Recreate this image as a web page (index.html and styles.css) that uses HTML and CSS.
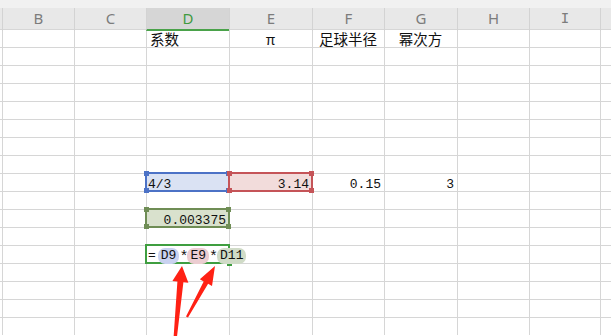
FILE: index.html
```html
<!DOCTYPE html>
<html lang="zh-CN">
<head>
    <meta charset="UTF-8">
    <meta name="viewport" content="width=device-width, initial-scale=1.0">
    <title>足球体积</title>
    <link rel="stylesheet" href="styles.css">
</head>
<body>
    <div class="topbar"></div>
    <div class="colhead">
        <div class="hd"></div>
        <div class="hd">B</div>
        <div class="hd">C</div>
        <div class="hd active">D</div>
        <div class="hd">E</div>
        <div class="hd">F</div>
        <div class="hd">G</div>
        <div class="hd">H</div>
        <div class="hd hd-i">I</div>
        <div class="hd"></div>
    </div>

    <div class="cells">
        <div class="cell r1 cD zh">系数</div>
        <div class="cell r1 cE zh center">π</div>
        <div class="cell r1 cF zh center">足球半径</div>
        <div class="cell r1 cG zh center">幂次方</div>

        <div class="cell r9 cD num ref blue">4/3</div>
        <div class="cell r9 cE num ref red right">3.14</div>
        <div class="cell r9 cF num right">0.15</div>
        <div class="cell r9 cG num right">3</div>

        <div class="cell r11 cD num ref green right">0.003375</div>

        <div class="cell r13 cD num edit">
            <span class="formula">=<span class="tok tok-blue">D9</span><span class="op">*</span><span class="tok tok-red">E9</span><span class="op">*</span><span class="tok tok-green">D11</span></span>
        </div>
    </div>

    <svg class="arrows" width="611" height="336" viewBox="0 0 611 336">
        <polygon points="182,266 188.4,282.7 183.4,282.2 176.6,340 173.4,340 177.4,281.6 172.4,281.1"/>
        <polygon points="215,266 212,286 208.1,283.8 188,317.6 186,316.4 203.7,281.4 199.8,279.2"/>
    </svg>
</body>
</html>
```

FILE: styles.css
```css
:root{
    --cols: 2px 72px 72px 83px 83px 72px 73px 72px 71px 1fr;
    --line: #d6d6d6;
}
body{
    margin: 0;
    position: relative;
    height: 336px;
    overflow: hidden;
    background: #fff;
    color: #111;
}
.topbar{
    height: 8px;
    background: #f1f1f1;
}
.colhead{
    display: grid;
    grid-template-columns: var(--cols);
    height: 21px;
    background: #e8e8e8;
}
.hd{
    border-left: 1px solid #d3d3d3;
    text-align: center;
    line-height: 21px;
    font-family: "Noto Sans", sans-serif;
    font-size: 15px;
    color: #7c7c7c;
}
.hd:first-child{
    border-left: none;
}
.hd-i{
    font-family: "DejaVu Sans Mono", monospace;
    font-size: 14px;
}
.hd.active{
    box-sizing: border-box;
    background: #d6d6d6;
    color: #3f9a3f;
    border-bottom: 2px solid #4aa24a;
}

/* grid lines are painted, cells are placed on the grid */
.cells{
    display: grid;
    grid-template-columns: var(--cols);
    grid-template-rows: repeat(17, 18px);
    background:
        linear-gradient(to right,
            transparent 2px, var(--line) 2px 3px,
            transparent 3px 74px, var(--line) 74px 75px,
            transparent 75px 146px, var(--line) 146px 147px,
            transparent 147px 229px, var(--line) 229px 230px,
            transparent 230px 312px, var(--line) 312px 313px,
            transparent 313px 384px, var(--line) 384px 385px,
            transparent 385px 457px, var(--line) 457px 458px,
            transparent 458px 529px, var(--line) 529px 530px,
            transparent 530px 600px, var(--line) 600px 601px,
            transparent 601px),
        repeating-linear-gradient(to bottom, var(--line) 0 1px, #fff 1px 18px);
}
.r1{ grid-row: 1; }
.r9{ grid-row: 9; }
.r11{ grid-row: 11; }
.r13{ grid-row: 13; }
.cD{ grid-column: 4; }
.cE{ grid-column: 5; }
.cF{ grid-column: 6; }
.cG{ grid-column: 7; }

.cell{
    box-sizing: border-box;
    padding: 1px 3px 0 3px;
    line-height: 18px;
    white-space: nowrap;
}
.zh{
    font-family: "Noto Sans CJK SC", sans-serif;
    font-size: 14.5px;
    padding-left: 4px;
}
.num{
    font-family: "Liberation Mono", monospace;
    font-size: 13px;
    padding-top: 3px;
    padding-left: 2px;
}
.center{
    text-align: center;
    padding-left: 0;
    padding-right: 0;
}
.right{
    text-align: right;
}

/* referenced ranges */
.ref{
    position: relative;
    background: var(--fill);
}
.ref::after{
    content: "";
    position: absolute;
    inset: -1px;
    border: 2px solid var(--c);
}
.ref::before{
    content: "";
    position: absolute;
    inset: -2px;
    z-index: 1;
    background-image:
        linear-gradient(var(--c), var(--c)),
        linear-gradient(var(--c), var(--c)),
        linear-gradient(var(--c), var(--c)),
        linear-gradient(var(--c), var(--c));
    background-size: 5px 5px;
    background-repeat: no-repeat;
    background-position: left top, right top, left bottom, right bottom;
}
.blue{
    --c: #4c72c6;
    --fill: #dae2f3;
}
.red{
    --c: #c55458;
    --fill: #f2dcdb;
}
.green{
    --c: #6f8d55;
    --fill: #d9e1cd;
}

/* cell being edited */
.edit{
    position: relative;
    padding-top: 2px;
}
.edit::after{
    content: "";
    position: absolute;
    inset: -1px;
    border: 2px solid #3f9e40;
}
.edit::before{
    content: "";
    position: absolute;
    right: -3px;
    bottom: -3px;
    width: 5px;
    height: 4px;
    background: #3f9e40;
}
.formula{
    position: relative;
    z-index: 1;
}
.tok{
    display: inline-block;
    padding: 0 3px;
    line-height: 16px;
    border-radius: 7px;
}
.op{
    display: inline-block;
    width: 8px;
    text-align: center;
    font-size: 15px;
    position: relative;
    top: 2px;
}
.tok-blue{
    margin-left: 2px;
    background: #c9d2f0;
}
.tok-red{
    background: #eccdd1;
}
.tok-green{
    background: #d0dbc7;
}

.arrows{
    position: absolute;
    left: 0;
    top: 0;
    pointer-events: none;
}
.arrows polygon{
    fill: #ff2114;
}
```
